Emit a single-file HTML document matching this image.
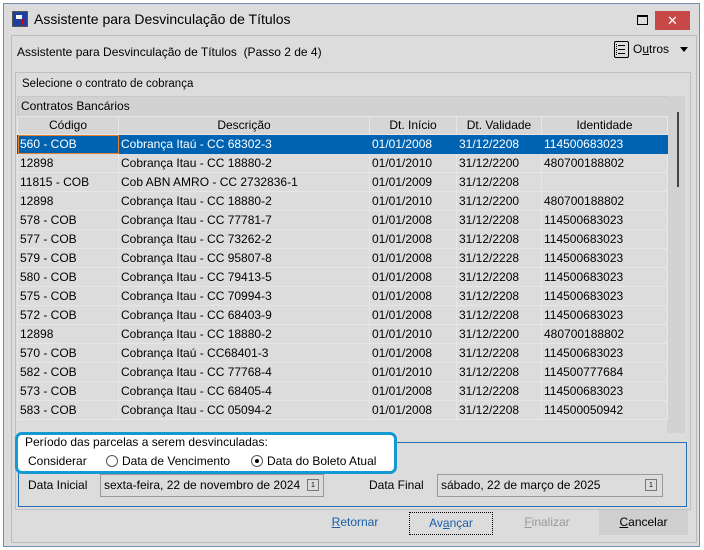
<!DOCTYPE html><html><head><style>
body{margin:0;width:704px;height:550px;background:#fff;font-family:"Liberation Sans",sans-serif;font-size:12px;color:#000;position:relative;overflow:hidden}
.a{position:absolute}
.win{left:3px;top:3px;width:695px;height:542px;background:#dcdcdc;border:1px solid #6f8fb5}
table{border-collapse:collapse;table-layout:fixed}
td{height:18px;line-height:18px;border:1px solid #e6e6e6;padding:0 0 0 2px;white-space:nowrap;overflow:hidden;font-size:12px}
th{height:17px;line-height:17px;padding:0;border:1px solid #e6e6e6;font-weight:normal;background:#d6d6d6;font-size:12px}
tr.sel td{background:#0063b1;color:#fff;border-color:#0063b1}
.btn{position:absolute;top:510px;height:25px;line-height:25px;text-align:center;font-size:12px}
u{text-decoration:underline}
.radio{display:inline-block;width:10px;height:10px;border:1px solid #555;border-radius:50%;background:#fff;vertical-align:-2px;margin-right:4px;position:relative}
.ln{position:absolute;left:3px;width:7px;height:1px;background:#000}
</style></head><body>
<div class="a win"></div>
<div class="a" style="left:12px;top:11px;width:14px;height:14px;background:#2040a0;border:1px solid #555"><div class="a" style="left:3px;top:3px;width:6px;height:4px;background:#fff"></div><div class="a" style="left:9px;top:7px;width:2px;height:6px;background:#d00"></div></div>
<div class="a" style="left:34px;top:11px;font-size:14px">Assistente para Desvinculação de Títulos</div>
<div class="a" style="left:637px;top:15px;width:9px;height:7px;border:1px solid #000;border-top-width:2px"></div>
<div class="a" style="left:655px;top:11px;width:35px;height:19px;background:#c84848;color:#fff;text-align:center;line-height:19px;font-size:13px">✕</div>
<div class="a" style="left:11px;top:35px;width:684px;height:506px;border:1px solid #bcbcbc;background:#dcdcdc"></div>
<div class="a" style="left:17px;top:45px;font-size:12px">Assistente para Desvinculação de Títulos&nbsp; (Passo 2 de 4)</div>
<div class="a" style="left:614px;top:41px;width:13px;height:15px;border:1px solid #000;border-radius:2px"><div class="ln" style="top:3px"></div><div class="ln" style="top:7px"></div><div class="ln" style="top:11px"></div><div class="a" style="left:1px;top:2px;width:1px;height:11px;border-left:1px dotted #000"></div></div>
<div class="a" style="left:633px;top:42px">O<u>u</u>tros</div>
<div class="a" style="left:680px;top:47px;border:4px solid transparent;border-top:5px solid #000"></div>
<div class="a" style="left:15px;top:72px;width:674px;height:436px;border:1px solid #bfbfbf"></div>
<div class="a" style="left:22px;top:78px;font-size:11.5px">Selecione o contrato de cobrança</div>
<div class="a" style="left:17px;top:96px;width:649px;height:19px;background:#d2d2d2;border:1px solid #c8c8c8"></div>
<div class="a" style="left:21px;top:99px">Contratos Bancários</div>
<div class="a" style="left:667px;top:96px;width:18px;height:337px;background:#d2d2d2"></div>
<div class="a" style="left:677px;top:112px;width:2px;height:75px;background:#444"></div>
<table class="a" style="left:17px;top:116px;width:650px">
<colgroup><col style="width:101px"><col style="width:251px"><col style="width:87px"><col style="width:85px"><col style="width:126px"></colgroup>
<tr><th>Código</th><th>Descrição</th><th>Dt. Início</th><th>Dt. Validade</th><th>Identidade</th></tr>
<tr class="sel"><td style="outline:1px solid #e08030;outline-offset:-1px">560 - COB</td><td>Cobrança Itaú - CC 68302-3</td><td>01/01/2008</td><td>31/12/2208</td><td>114500683023</td></tr>
<tr><td>12898</td><td>Cobrança Itau - CC 18880-2</td><td>01/01/2010</td><td>31/12/2200</td><td>480700188802</td></tr>
<tr><td>11815 - COB</td><td>Cob ABN AMRO - CC 2732836-1</td><td>01/01/2009</td><td>31/12/2208</td><td></td></tr>
<tr><td>12898</td><td>Cobrança Itau - CC 18880-2</td><td>01/01/2010</td><td>31/12/2200</td><td>480700188802</td></tr>
<tr><td>578 - COB</td><td>Cobrança Itau - CC 77781-7</td><td>01/01/2008</td><td>31/12/2208</td><td>114500683023</td></tr>
<tr><td>577 - COB</td><td>Cobrança Itau - CC 73262-2</td><td>01/01/2008</td><td>31/12/2208</td><td>114500683023</td></tr>
<tr><td>579 - COB</td><td>Cobrança Itau - CC 95807-8</td><td>01/01/2008</td><td>31/12/2228</td><td>114500683023</td></tr>
<tr><td>580 - COB</td><td>Cobrança Itau - CC 79413-5</td><td>01/01/2008</td><td>31/12/2208</td><td>114500683023</td></tr>
<tr><td>575 - COB</td><td>Cobrança Itau - CC 70994-3</td><td>01/01/2008</td><td>31/12/2208</td><td>114500683023</td></tr>
<tr><td>572 - COB</td><td>Cobrança Itau - CC 68403-9</td><td>01/01/2008</td><td>31/12/2208</td><td>114500683023</td></tr>
<tr><td>12898</td><td>Cobrança Itau - CC 18880-2</td><td>01/01/2010</td><td>31/12/2200</td><td>480700188802</td></tr>
<tr><td>570 - COB</td><td>Cobrança Itaú - CC68401-3</td><td>01/01/2008</td><td>31/12/2208</td><td>114500683023</td></tr>
<tr><td>582 - COB</td><td>Cobrança Itau - CC 77768-4</td><td>01/01/2010</td><td>31/12/2208</td><td>114500777684</td></tr>
<tr><td>573 - COB</td><td>Cobrança Itau - CC 68405-4</td><td>01/01/2008</td><td>31/12/2208</td><td>114500683023</td></tr>
<tr><td>583 - COB</td><td>Cobrança Itau - CC 05094-2</td><td>01/01/2008</td><td>31/12/2208</td><td>114500050942</td></tr>
</table>
<div class="a" style="left:18px;top:442px;width:667px;height:63px;border:1px solid #2a6fb5"></div>
<div class="a" style="left:15px;top:432px;width:376px;height:36px;border:3px solid #149ad3;border-radius:7px;background:#fff"></div>
<div class="a" style="left:25px;top:435px">Período das parcelas a serem desvinculadas:</div>
<div class="a" style="left:28px;top:454px">Considerar</div>
<div class="a" style="left:106px;top:454px"><span class="radio"></span>Data de Vencimento</div>
<div class="a" style="left:251px;top:454px"><span class="radio"><span class="a" style="left:3px;top:3px;width:4px;height:4px;border-radius:50%;background:#000"></span></span>Data do Boleto Atual</div>
<div class="a" style="left:28px;top:478px">Data Inicial</div>
<div class="a" style="left:100px;top:474px;width:222px;height:21px;border:1px solid #999;background:#dcdcdc"></div>
<div class="a" style="left:104px;top:478px">sexta-feira, 22 de novembro de 2024</div>
<div class="a" style="left:307px;top:479px;width:10px;height:10px;border:1px solid #777;font-size:7px;text-align:center;line-height:11px">1</div>
<div class="a" style="left:369px;top:478px">Data Final</div>
<div class="a" style="left:437px;top:474px;width:224px;height:21px;border:1px solid #999;background:#dcdcdc"></div>
<div class="a" style="left:441px;top:478px">sábado, 22 de março de 2025</div>
<div class="a" style="left:645px;top:479px;width:10px;height:10px;border:1px solid #777;font-size:7px;text-align:center;line-height:11px">1</div>
<div class="btn" style="left:325px;width:60px;color:#1a5fa8"><u>R</u>etornar</div>
<div class="btn" style="left:409px;width:82px;top:512px;height:21px;line-height:21px;border:1px dotted #000;color:#1a5fa8">Av<u>a</u>nçar</div>
<div class="btn" style="left:515px;width:64px;color:#999"><u>F</u>inalizar</div>
<div class="btn" style="left:599px;width:89px;background:#cfcfcf"><u>C</u>ancelar</div>
</body></html>
